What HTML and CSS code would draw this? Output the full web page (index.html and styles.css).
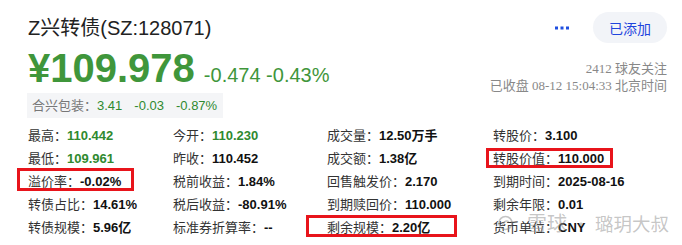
FILE: index.html
```html
<!DOCTYPE html>
<html lang="zh-CN">
<head>
<meta charset="utf-8">
<title>Z兴转债</title>
<link rel="stylesheet" href="styles.css">
</head>
<body>
<div class="page">
  <div class="top">
    <h1 class="title">Z兴转债(SZ:128071)</h1>
    <div class="actions">
      <svg class="more" width="14" height="4" viewBox="0 0 14 4"><rect x="0" y="0.5" width="3" height="3" fill="#1f4fe0"/><rect x="5.5" y="0.5" width="3" height="3" fill="#1f4fe0"/><rect x="11" y="0.5" width="3" height="3" fill="#1f4fe0"/></svg>
      <button class="added">已添加</button>
    </div>
  </div>
  <div class="price-row">
    <div class="price">
      <span class="now">¥109.978</span>
      <span class="chg">-0.474 -0.43%</span>
    </div>
    <div class="meta">
      <div>2412 球友关注</div>
      <div>已收盘 08-12 15:04:33 北京时间</div>
    </div>
  </div>
  <div class="stock">
    <span class="stock-label">合兴包装：</span><span class="g">3.41</span><span class="g">-0.03</span><span class="g">-0.87%</span>
  </div>
  <div class="quote">
    <div class="cell">最高：<b class="gv">110.442</b></div>
    <div class="cell">今开：<b class="gv">110.230</b></div>
    <div class="cell">成交量：<b>12.50万手</b></div>
    <div class="cell">转股价：<b>3.100</b></div>

    <div class="cell">最低：<b class="gv">109.961</b></div>
    <div class="cell">昨收：<b>110.452</b></div>
    <div class="cell">成交额：<b>1.38亿</b></div>
    <div class="cell">转股价值：<b>110.000</b></div>

    <div class="cell">溢价率：<b>-0.02%</b></div>
    <div class="cell">税前收益：<b>1.84%</b></div>
    <div class="cell">回售触发价：<b>2.170</b></div>
    <div class="cell">到期时间：<b>2025-08-16</b></div>

    <div class="cell">转债占比：<b>14.61%</b></div>
    <div class="cell">税后收益：<b>-80.91%</b></div>
    <div class="cell">到期赎回价：<b>110.000</b></div>
    <div class="cell">剩余年限：<b>0.01</b></div>

    <div class="cell">转债规模：<b>5.96亿</b></div>
    <div class="cell">标准券折算率：<b>--</b></div>
    <div class="cell">剩余规模：<b>2.20亿</b></div>
    <div class="cell">货币单位：<b>CNY</b></div>
  </div>

  <div class="mark mark-1"></div>
  <div class="mark mark-2"></div>
  <div class="mark mark-3"></div>

  <div class="watermark">
    <svg class="wm-logo" width="15" height="18" viewBox="0 0 15 18"><circle cx="7.5" cy="9" r="6.5" fill="none" stroke="rgba(140,140,140,0.5)" stroke-width="1.6"/><path d="M4.5 11 Q7.5 5 11 8" fill="none" stroke="rgba(140,140,140,0.5)" stroke-width="1.4"/></svg>
    <span class="wm-xq">雪球</span>
    <span class="wm-dot">·</span>
    <span class="wm-name">璐玥大叔</span>
  </div>
</div>
</body>
</html>
```

FILE: styles.css
```css
* { box-sizing: border-box; }
html, body { margin: 0; padding: 0; background: #fff; }
body {
  font-family: "Liberation Sans", "Noto Sans CJK SC", sans-serif;
  color: #333;
}
.page {
  position: relative;
  width: 682px;
  height: 245px;
  padding: 12px 15px 0 28px;
  overflow: hidden;
}
.top {
  display: flex;
  justify-content: space-between;
  align-items: center;
  height: 31px;
}
.title {
  margin: 0;
  font-size: 20px;
  font-weight: normal;
  color: #222;
  line-height: 26px;
}
.actions {
  display: flex;
  align-items: center;
  gap: 24px;
}
.more { display: block; margin-top: 1px; }
.added {
  height: 31px;
  width: 74px;
  padding: 0;
  border: none;
  border-radius: 16px;
  background: #f2f4f8;
  color: #1f45dd;
  font-family: "Liberation Sans", "Noto Sans CJK SC", sans-serif;
  font-size: 14px;
}
.price-row {
  display: flex;
  justify-content: space-between;
  align-items: flex-start;
  height: 44px;
  margin-top: 3px;
}
.price {
  display: flex;
  align-items: baseline;
  gap: 9px;
  line-height: 44px;
  color: #3f963b;
}
.now {
  font-size: 40px;
  font-weight: bold;
}
.chg {
  font-size: 20px;
}
.meta {
  margin-top: 14px;
  text-align: right;
  font-family: "Liberation Serif", "Noto Sans CJK SC", serif;
  font-size: 13px;
  line-height: 17px;
  color: #888;
}
.stock {
  display: flex;
  width: fit-content;
  align-items: center;
  gap: 12px;
  margin: 3px 0 0 -1px;
  height: 25px;
  padding: 0 6px 0 5px;
  background: #f4f5f7;
  font-size: 13px;
  line-height: 25px;
}
.stock-label {
  color: #777;
  margin-right: -12px;
}
.g { color: #2f8a2f; }
.quote {
  display: grid;
  grid-template-columns: 145px 154px 166px 1fr;
  margin-top: 6px;
  font-size: 13px;
  line-height: 23px;
  color: #333;
}
.cell { white-space: nowrap; }
.cell b { color: #111; }
.cell b.gv { color: #2f8a2f; }
.mark {
  position: absolute;
  border: 3px solid #e8141b;
}
.mark-1 { left: 17px; top: 168px; width: 117px; height: 23px; }
.mark-2 { left: 486px; top: 148px; width: 127px; height: 20px; }
.mark-3 { left: 306px; top: 215px; width: 151px; height: 22px; }
.watermark {
  position: absolute;
  left: 498px;
  top: 211px;
  display: flex;
  align-items: center;
  gap: 6px;
  color: rgba(150, 150, 150, 0.55);
  font-family: "Noto Sans CJK SC", sans-serif;
  pointer-events: none;
}
.wm-xq { font-size: 20px; line-height: 24px; margin-left: 8px; }
.wm-dot { font-size: 16px; line-height: 24px; }
.wm-name { font-size: 18.5px; line-height: 24px; }
```
